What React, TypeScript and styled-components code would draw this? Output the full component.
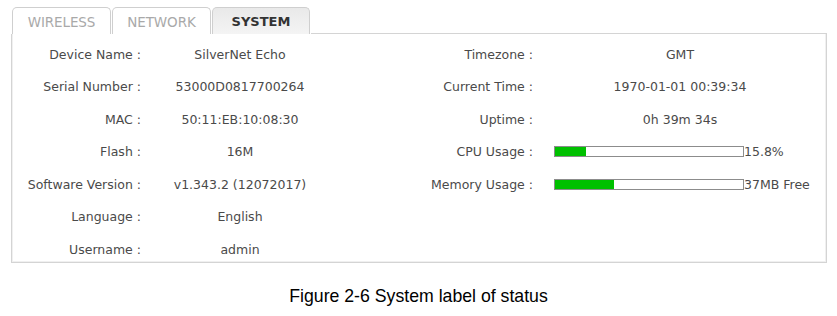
import React from "react";
import styled, { createGlobalStyle } from "styled-components";

const Global = createGlobalStyle`
  html, body { margin: 0; padding: 0; background: #fff; }
  body { font-family: "DejaVu Sans", Verdana, sans-serif; }
`;

const Page = styled.div`
  width: 837px;
  height: 316px;
  display: flex;
  flex-direction: column;
  padding: 7px 10px 0 11px;
  box-sizing: border-box;
`;

const Tabs = styled.div`
  display: flex;
  height: 27px;
  padding-left: 1px;
`;

const Tab = styled.div<{ $active?: boolean }>`
  width: ${(p) => (p.$active ? "98px" : "99px")};
  box-sizing: border-box;
  margin-right: 1px;
  border: 1px solid #cfcfcf;
  border-bottom: none;
  border-radius: 5px 5px 0 0;
  display: flex;
  align-items: center;
  justify-content: center;
  font-size: ${(p) => (p.$active ? "13px" : "13.5px")};
  letter-spacing: ${(p) => (p.$active ? "0" : "-0.1px")};
  font-weight: ${(p) => (p.$active ? 700 : 400)};
  color: ${(p) => (p.$active ? "#333" : "#a9a9a9")};
  background: ${(p) =>
    p.$active ? "linear-gradient(#e9e9e9, #f4f4f4)" : "#fff"};
  padding-top: 1px;
`;

const TabFill = styled.div`
  flex: 1;
  border-bottom: 1px solid #d4d4d4;
`;

const Panel = styled.div`
  width: 816px;
  height: 229px;
  box-sizing: border-box;
  border: 1px solid #d4d4d4;
  border-top: none;
  box-shadow: inset 1px 0 0 #f0f0f0, inset -1px 0 0 #f0f0f0, inset 0 -1px 0 #f0f0f0;
  display: grid;
  grid-template-columns: 139px 178px 214px 1fr;
  grid-auto-rows: 26px;
  row-gap: 6.5px;
  padding-top: 7px;
  font-size: 12.5px;
  color: #4a4a4a;
`;

const Label = styled.div`
  display: flex;
  align-items: center;
  justify-content: flex-end;
  padding-right: 10px;
  white-space: nowrap;
`;

const Value = styled.div<{ $wide?: boolean }>`
  display: flex;
  align-items: center;
  justify-content: center;
  white-space: nowrap;
  padding: ${(p) => (p.$wide ? "0 20px 0 11px" : "0")};
`;

const BarCell = styled.div`
  display: flex;
  align-items: center;
  padding-left: 11px;
  white-space: nowrap;
`;

const Bar = styled.div`
  width: 190px;
  height: 11px;
  box-sizing: border-box;
  border: 1px solid #8c8c8c;
  background: #fff;
  display: flex;
`;

const BarFill = styled.div`
  background: #00c000;
  height: 100%;
`;

const Caption = styled.div`
  margin-top: 23px;
  text-align: center;
  font-family: "Liberation Sans", Arial, sans-serif;
  font-size: 17.7px;
  color: #000;
  margin-left: -11px;
  margin-right: -10px;
`;

const Empty = styled.div``;

type Row = [string, string, string, React.ReactNode];

const Usage = ({ pct, text }: { pct: number; text: string }) => (
  <BarCell>
    <Bar>
      <BarFill style={{ width: `${pct}px` }} />
    </Bar>
    <span>{text}</span>
  </BarCell>
);

export default function App() {
  const rows: Row[] = [
    ["Device Name :", "SilverNet Echo", "Timezone :", "GMT"],
    ["Serial Number :", "53000D0817700264", "Current Time :", "1970-01-01 00:39:34"],
    ["MAC :", "50:11:EB:10:08:30", "Uptime :", "0h 39m 34s"],
    ["Flash :", "16M", "CPU Usage :", <Usage pct={31} text="15.8%" />],
    ["Software Version :", "v1.343.2 (12072017)", "Memory Usage :", <Usage pct={59} text="37MB Free" />],
    ["Language :", "English", "", null],
    ["Username :", "admin", "", null],
  ];
  return (
    <Page>
      <Global />
      <Tabs>
        <Tab>WIRELESS</Tab>
        <Tab>NETWORK</Tab>
        <Tab $active>SYSTEM</Tab>
        <TabFill />
      </Tabs>
      <Panel>
        {rows.map((r, i) => (
          <React.Fragment key={i}>
            <Label>{r[0]}</Label>
            <Value>{r[1]}</Value>
            {r[2] ? <Label>{r[2]}</Label> : <Empty />}
            {typeof r[3] === "string" ? <Value $wide>{r[3]}</Value> : r[3] ?? <Empty />}
          </React.Fragment>
        ))}
      </Panel>
      <Caption>Figure 2-6 System label of status</Caption>
    </Page>
  );
}
